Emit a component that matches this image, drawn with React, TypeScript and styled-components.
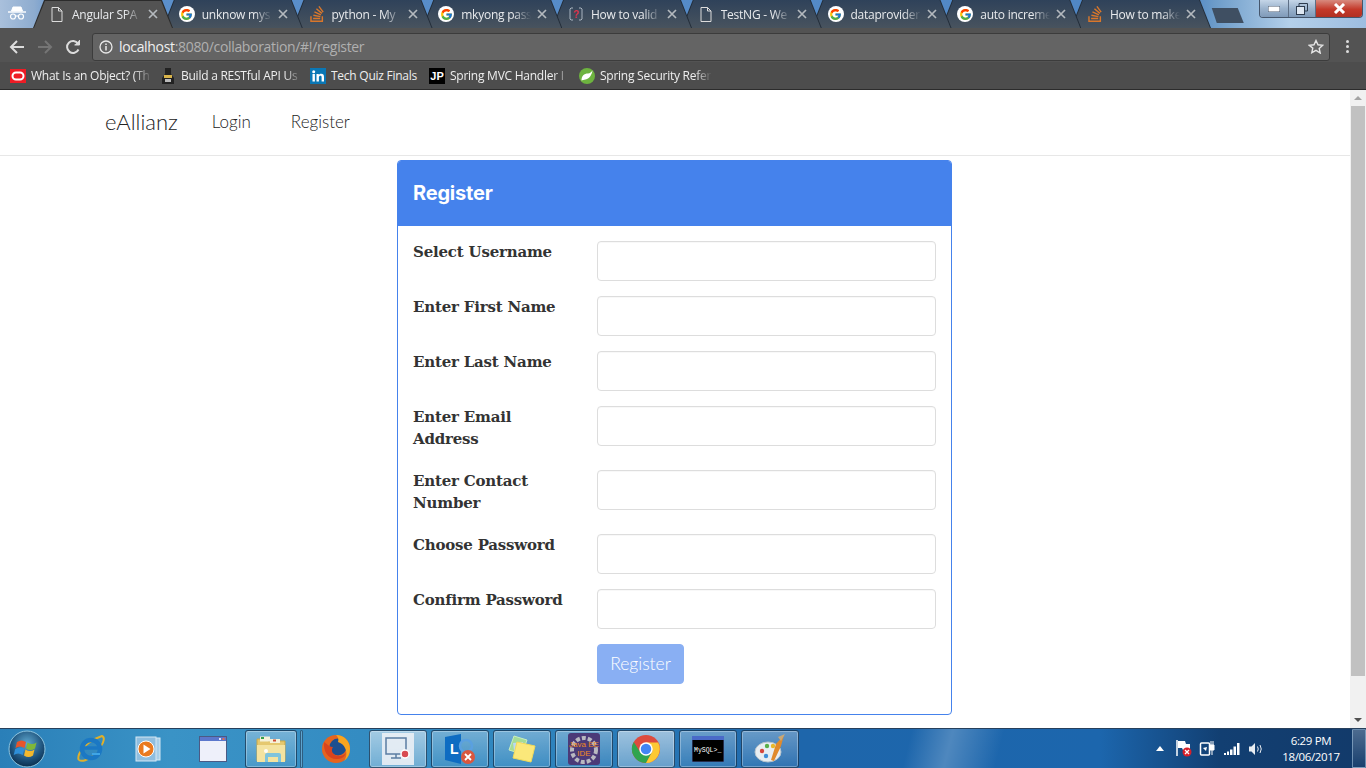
import React from 'react';
import styled, { createGlobalStyle } from 'styled-components';
import { FcGoogle } from 'react-icons/fc';
import { SiStackoverflow } from 'react-icons/si';

const GlobalStyle = createGlobalStyle`
  html, body { margin: 0; padding: 0; height: 100%; overflow: hidden; background: #fff; }
  * { box-sizing: border-box; }
`;

const UI = '"Open Sans", "Liberation Sans", sans-serif';
const THIN = 'Lato, "Liberation Sans", sans-serif';

const Screen = styled.div`
  width: 1366px;
  height: 768px;
  display: flex;
  flex-direction: column;
  overflow: hidden;
`;

/* browser chrome */
const TabStrip = styled.div`
  height: 28px;
  flex: none;
  display: flex;
  background: linear-gradient(90deg, #a9c0dc 0, #8eaccf 34px, #5c90cc 60px, #4f86c4 1190px, #6d9cc9 1215px, #b4d0ea 1290px, #9dbde0 1366px);
  position: relative;
  overflow: hidden;
`;
const Incognito = styled.div`
  width: 33px;
  flex: none;
  display: flex;
  align-items: center;
  justify-content: center;
  padding-bottom: 2px;
  position: relative;
  z-index: 20;
`;
const TabRow = styled.div`
  display: flex;
`;
const Tab = styled.div<{ $active?: boolean; $z: number }>`
  width: 140px;
  height: 28px;
  margin-right: -10.25px;
  flex: none;
  position: relative;
  z-index: ${p => p.$z};
  background: ${p => (p.$active ? '#2b2b2b' : '#222c38')};
  clip-path: polygon(0 100%, 11px 0, 129px 0, 140px 100%);
  display: flex;
  align-items: center;
  padding: 0 15px 0 16px;
  gap: 7px;
  &::before {
    content: '';
    position: absolute;
    inset: ${p => (p.$active ? '1px' : '0')} 1px 0 1px;
    background: ${p => (p.$active ? '#535353' : 'linear-gradient(#2f425a, #48535e)')};
    clip-path: polygon(0 100%, 11px 0, calc(100% - 11px) 0, 100% 100%);
  }
  & > * { position: relative; }
`;
const TabIcon = styled.span`
  width: 16px;
  height: 16px;
  flex: none;
  display: flex;
  align-items: center;
  justify-content: center;
`;
const TabTitle = styled.span`
  flex: 1;
  font: 12px ${UI};
  letter-spacing: -0.25px;
  color: #e8eaed;
  white-space: nowrap;
  overflow: hidden;
  -webkit-mask-image: linear-gradient(90deg, #000 72%, transparent 96%);
  mask-image: linear-gradient(90deg, #000 72%, transparent 96%);
`;
const TabClose = styled.span`
  flex: none;
  width: 10px;
  height: 10px;
  margin-left: -4px;
  display: flex;
`;
const NewTab = styled.div`
  width: 33px;
  height: 15px;
  margin: 8px 0 0 10px;
  background: #3f4f62;
  clip-path: polygon(1px 0, 27px 0, 33px 100%, 6px 100%);
  flex: none;
`;
const WindowButtons = styled.div`
  position: absolute;
  right: 3px;
  top: 0;
  height: 18px;
  width: 104px;
  display: flex;
  border: 1px solid #45566c;
  border-top: none;
  border-radius: 0 0 4px 4px;
  overflow: hidden;
`;
const WinButton = styled.div<{ $close?: boolean; $w: number }>`
  width: ${p => p.$w}px;
  flex: none;
  display: flex;
  align-items: center;
  justify-content: center;
  border-right: 1px solid #5d6f86;
  background: ${p =>
    p.$close ? 'linear-gradient(#d88a7e, #c4392a 55%, #b13022)' : 'linear-gradient(#c5d6e8, #9bb3cd 50%, #7f9ab8)'};
`;

const Toolbar = styled.div`
  height: 34px;
  flex: none;
  background: #535353;
  display: flex;
  align-items: center;
  padding: 3px 0 0 3px;
`;
const NavBtn = styled.span`
  width: 28px;
  height: 20px;
  flex: none;
  display: flex;
  align-items: center;
  justify-content: center;
`;
const Omnibox = styled.div`
  width: 1238px;
  height: 28px;
  margin-left: 5px;
  flex: none;
  background: #646464;
  border: 1px solid #3c3c3c;
  border-radius: 3px;
  display: flex;
  align-items: center;
  padding: 0 5px 0 6px;
`;
const Url = styled.div`
  flex: 1;
  margin-left: 6px;
  font: 14px ${UI};
  color: #b0b0b0;
  letter-spacing: -0.33px;
  b { font-weight: 400; color: #f0f0f0; }
`;
const MenuDots = styled.span`
  margin-left: 16px;
  width: 4px;
  display: flex;
  flex-direction: column;
  gap: 2px;
  i { width: 3px; height: 3px; background: #ddd; border-radius: 50%; display: block; }
`;
const Bookmarks = styled.div`
  height: 28px;
  flex: none;
  background: #4d4d4d;
  border-bottom: 1px solid #2c2c2c;
  display: flex;
  align-items: center;
  padding-left: 10px;
`;
const Bookmark = styled.div<{ $w: number }>`
  width: ${p => p.$w}px;
  flex: none;
  display: flex;
  align-items: center;
  gap: 5px;
`;
const BookmarkIcon = styled.span`
  width: 16px;
  height: 16px;
  flex: none;
  display: flex;
  align-items: center;
  justify-content: center;
`;
const JpBadge = styled(BookmarkIcon)`
  background: #000;
  color: #fff;
  font: 700 11px "Liberation Sans", sans-serif;
`;
const BookmarkTitle = styled.span<{ $fade?: boolean }>`
  font: 12px ${UI};
  letter-spacing: -0.25px;
  color: #eee;
  white-space: nowrap;
  overflow: hidden;
  flex: 1;
  ${p =>
    p.$fade
      ? `-webkit-mask-image: linear-gradient(90deg,#000 80%,transparent 94%); mask-image: linear-gradient(90deg,#000 80%,transparent 94%);`
      : ''}
`;

/* page */
const Viewport = styled.div`
  flex: 1;
  display: flex;
  min-height: 0;
`;
const Page = styled.div`
  flex: 1;
  background: #fff;
  display: flex;
  flex-direction: column;
  align-items: stretch;
`;
const Navbar = styled.nav`
  height: 66px;
  flex: none;
  border-bottom: 1px solid #e7e7e7;
  display: flex;
  align-items: center;
  padding: 0 0 3px 105px;
  font-family: ${THIN};
  font-weight: 300;
`;
const Brand = styled.span`
  font-size: 22px;
  margin-right: 34px;
  color: #222;
  font-weight: 300;
`;
const NavLink = styled.span`
  font-size: 17px;
  margin-right: 40px;
  color: #222;
`;
const Panel = styled.section`
  width: 555px;
  height: 555px;
  margin: 4px 0 0 397px;
  border: 1px solid #4582ec;
  border-radius: 4px;
  background: #fff;
  overflow: hidden;
`;
const PanelHead = styled.h3`
  margin: 0;
  height: 65px;
  background: #4582ec;
  color: #fff;
  font: 700 20px/65px Inter, ${THIN};
  letter-spacing: -0.2px;
  padding-left: 15px;
`;
const PanelBody = styled.div`
  padding: 15px 15px 15px;
`;
const FormRow = styled.div`
  display: grid;
  grid-template-columns: 184px 339px;
  margin-bottom: 15px;
`;
const Label = styled.label`
  font: 700 15px/22px 'DejaVu Serif', 'Liberation Serif', serif;
  letter-spacing: -0.2px;
  color: #333;
  margin-bottom: 5px;
  max-width: 158px;
  align-self: start;
`;
const Input = styled.input`
  width: 339px;
  height: 40px;
  border: 1px solid #ddd;
  border-radius: 4px;
  background: #fff;
  outline: none;
  box-shadow: inset 0 1px 1px rgba(0, 0, 0, 0.03);
`;
const SubmitButton = styled.button`
  width: 87px;
  height: 40px;
  grid-column: 2;
  border: 1px solid #89aff3;
  border-radius: 4px;
  background: #89aff3;
  color: #fff;
  font: 300 17.5px ${THIN};
  padding: 0 0 2px;
`;

const Scrollbar = styled.div`
  width: 16px;
  flex: none;
  background: #f1f1f1;
  display: flex;
  flex-direction: column;
  align-items: center;
`;
const ScrollArrow = styled.div<{ $down?: boolean }>`
  width: 16px;
  height: 16px;
  flex: none;
  display: flex;
  align-items: center;
  justify-content: center;
  &::after {
    content: '';
    border-left: 4px solid transparent;
    border-right: 4px solid transparent;
    ${p => (p.$down ? 'border-top: 4px solid #505050;' : 'border-bottom: 4px solid #a3a3a3;')}
  }
`;
const ScrollThumb = styled.div`
  width: 14px;
  height: 570px;
  flex: none;
  background: #c1c1c1;
`;
const ScrollRest = styled.div`
  flex: 1;
`;

/* windows taskbar */
const Taskbar = styled.footer`
  height: 40px;
  flex: none;
  display: flex;
  align-items: center;
  border-top: 1px solid #27405c;
  background:
    linear-gradient(104deg, transparent 885px, rgba(255,255,255,0.22) 925px, transparent 975px),
    linear-gradient(90deg, #2a7fb8 0, #3a93c6 170px, #2f86bf 520px, #1e66ab 800px, #1c66ad 1100px, #123f72 1220px, #123a6a 1366px);
  position: relative;
`;
const Orb = styled.div`
  width: 52px;
  margin-left: 1px;
  flex: none;
  display: flex;
  justify-content: center;
`;
const QuickIcon = styled.div<{ $w: number; $pad?: number }>`
  width: ${p => p.$w}px;
  padding-left: ${p => p.$pad ?? 0}px;
  flex: none;
  display: flex;
  justify-content: center;
  align-items: center;
`;
const TaskButton = styled.div<{ $active?: boolean; $w?: number }>`
  width: ${p => p.$w ?? 58}px;
  height: 38px;
  margin-right: 4px;
  flex: none;
  display: flex;
  align-items: center;
  justify-content: center;
  border: 1px solid rgba(15, 45, 75, 0.75);
  border-radius: 3px;
  box-shadow: inset 0 0 0 1px rgba(255, 255, 255, 0.3);
  background: ${p =>
    p.$active
      ? 'linear-gradient(rgba(255,255,255,0.55), rgba(255,255,255,0.3))'
      : 'linear-gradient(rgba(255,255,255,0.32), rgba(255,255,255,0.08))'};
`;
const Separator = styled.div`
  width: 3px;
  height: 38px;
  margin-left: -1px;
  flex: none;
  border: 1px solid rgba(15, 45, 75, 0.6);
  border-radius: 2px;
  background: rgba(255,255,255,0.2);
`;
const Tray = styled.div`
  margin-left: auto;
  height: 100%;
  display: flex;
  align-items: center;
`;
const TrayIcon = styled.span<{ $w: number }>`
  width: ${p => p.$w}px;
  flex: none;
  display: flex;
  align-items: center;
  justify-content: center;
`;
const Clock = styled.div`
  width: 78px;
  margin-left: 4px;
  text-align: center;
  font: 11.5px/16px ${UI};
  color: #fff;
  letter-spacing: -0.35px;
`;
const ShowDesktop = styled.div`
  width: 14px;
  height: 100%;
  margin-left: 2px;
  border: 1px solid rgba(170, 200, 225, 0.55);
  border-radius: 1px;
  background: linear-gradient(rgba(255,255,255,0.25), rgba(255,255,255,0.03));
`;
const GoogleDisc = styled.span`
  background: #fff;
  border-radius: 50%;
  width: 16px;
  height: 16px;
  display: flex;
  align-items: center;
  justify-content: center;
`;
const RemoteTile = styled.span`
  width: 32px;
  height: 32px;
  background: rgba(235, 240, 245, 0.9);
  display: flex;
  align-items: center;
  justify-content: center;
`;

/* drawings */
const PageIcon = () => (
  <svg width="12" height="15" viewBox="0 0 12 15" fill="none" stroke="#dcdcdc" strokeWidth="1">
    <path d="M1 .5h6.5L11 4v10.5H1zM7.5.5V4H11" />
  </svg>
);
const SoIcon = () => <SiStackoverflow size={16} color="#d9772b" />;
const GoogleIcon = () => (
  <GoogleDisc>
    <FcGoogle size={13} />
  </GoogleDisc>
);
const QuestionIcon = () => (
  <svg width="14" height="14" viewBox="0 0 14 14" fill="none">
    <path d="M4 1H2L1 2v10l1 1h2M10 1h2l1 1v10l-1 1h-2" stroke="#a9b4c0" />
    <text x="7" y="11" textAnchor="middle" fontSize="10" fontWeight="700" fill="#d8334a" fontFamily="Liberation Sans">?</text>
  </svg>
);
const CloseX = () => (
  <svg width="10" height="10" viewBox="0 0 10 10" stroke="#b4b9be" strokeWidth="1.7">
    <path d="M1 1l8 8M9 1l-8 8" />
  </svg>
);
const IncognitoIcon = () => (
  <svg width="18" height="14" viewBox="0 0 18 14" fill="none" stroke="#fff">
    <path d="M5 1h8l1.5 4h-11z" fill="#fff" />
    <path d="M0 6h18" strokeWidth="1.4" />
    <circle cx="5" cy="10.5" r="2.5" strokeWidth="1.2" />
    <circle cx="13" cy="10.5" r="2.5" strokeWidth="1.2" />
    <path d="M7.5 10h3" />
  </svg>
);
const LinkedinIcon = () => (
  <svg width="16" height="16" viewBox="0 0 16 16">
    <rect width="16" height="16" fill="#0a77b5" />
    <rect x="2.500" y="6" width="2.400" height="7.500" fill="#fff" />
    <circle cx="3.700" cy="3.700" r="1.500" fill="#fff" />
    <path d="M6.500 6h2.300v1.100C9.300 6.300 10.200 5.800 11.200 5.800c2 0 2.800 1.200 2.800 3.200v4.500h-2.400V9.300c0-1-.3-1.500-1.100-1.500-.9 0-1.600.6-1.600 1.700v4H6.500z" fill="#fff" />
  </svg>
);
const SpringIcon = () => (
  <svg width="16" height="16" viewBox="0 0 16 16">
    <circle cx="8" cy="8" r="8" fill="#6db33f" />
    <path d="M13.500 2.500C13 6 11 10.500 6.500 11.500 5 12 3.500 12 2.500 12.500 2.500 8 5 5.500 9 5.500c2 0 3.500-1.500 4.500-3z" fill="#fff" />
  </svg>
);
const ChromeLogo = ({ size }: { size: number }) => (
  <svg width={size} height={size} viewBox="0 0 32 32">
    <circle cx="16" cy="16" r="15" fill="#dd4b3e" />
    <path d="M3 8.500A15 15 0 0 0 16 31l7-13H9z" fill="#2fa44f" />
    <path d="M16 9h13a15 15 0 0 1-13 22l7-13z" fill="#fcc934" />
    <circle cx="16" cy="16" r="7.2" fill="#fff" />
    <circle cx="16" cy="16" r="5.6" fill="#4285f4" />
  </svg>
);
const OrbIcon = () => (
  <svg width="38" height="38" viewBox="0 0 38 38">
    <defs>
      <radialGradient id="orb" cx="50%" cy="35%" r="65%">
        <stop offset="0" stopColor="#5fa8d0" />
        <stop offset="0.7" stopColor="#1c4f78" />
        <stop offset="1" stopColor="#0c2f4e" />
      </radialGradient>
    </defs>
    <circle cx="19" cy="19" r="18" fill="url(#orb)" stroke="#8fc6e0" strokeWidth="1" />
    <path d="M9 12c3-2 6-2 9 0l-1.500 6c-3-2-6-2-9 0z" fill="#e8552a" />
    <path d="M19.500 12.500c3 2 6 2 9 0l-1.500 6c-3 2-6 2-9 0z" fill="#7fb83a" />
    <path d="M7.200 19c3-2 6-2 9 0l-1.500 6c-3-2-6-2-9 0z" fill="#2f8fd8" />
    <path d="M17.500 19.500c3 2 6 2 9 0l-1.500 6c-3 2-6 2-9 0z" fill="#f4b82c" />
  </svg>
);
const IeIcon = () => (
  <svg width="32" height="32" viewBox="0 0 32 32" fill="none">
    <path d="M5 27C2 24 8 10 28 3c3 1 2 6-1 10" stroke="#e0b02a" strokeWidth="2" />
    <path d="M5 27c3 2 9 0 14-4" stroke="#e0b02a" strokeWidth="2" />
    <circle cx="17" cy="16" r="9" stroke="#1b78c4" strokeWidth="4.500" />
    <path d="M10 15h14" stroke="#1b78c4" strokeWidth="3.500" />
    <path d="M18 21h8" stroke="#3fa5e6" strokeWidth="2" />
  </svg>
);
const WmpIcon = () => (
  <svg width="26" height="28" viewBox="0 0 26 28">
    <rect x="5" y="3" width="20" height="22" fill="#a8cfe8" stroke="#d6e8f4" />
    <rect x="1" y="2" width="20" height="24" fill="#8fbedf" stroke="#d6e8f4" />
    <circle cx="11" cy="14" r="8" fill="#ea7a1f" stroke="#fff" strokeWidth="1" />
    <path d="M8.500 9.500l7 4.500-7 4.500z" fill="#fff" />
  </svg>
);
const WindowIcon = () => (
  <svg width="28" height="26" viewBox="0 0 28 26">
    <rect x=".5" y=".5" width="27" height="25" fill="#eef0fa" stroke="#4b5a85" />
    <rect x="1" y="1" width="26" height="4" fill="#5b77cc" />
    <rect x="20" y="2" width="2" height="2" fill="#dfe6ff" />
    <rect x="23.500" y="2" width="2" height="2" fill="#e06a4c" />
  </svg>
);
const ExplorerIcon = () => (
  <svg width="32" height="30" viewBox="0 0 32 30">
    <path d="M2 5h9l2 2h17v20H2z" fill="#e5c86f" stroke="#c8a848" />
    <rect x="5" y="2.500" width="10" height="5" fill="#f6f1d8" />
    <rect x="6" y="3" width="3" height="2" fill="#37a04a" />
    <rect x="15" y="5" width="10" height="4" fill="#f6f1d8" />
    <rect x="18" y="5.500" width="3" height="2" fill="#cf4a34" />
    <path d="M2 11h28v17H2z" fill="#f4e3a0" />
    <path d="M10 28v-7q0-2 2-2h12q2 0 2 2v7h-3v-5H13v5z" fill="#7fc4dc" />
    <circle cx="11" cy="17" r="2" fill="#fff" opacity=".9" />
  </svg>
);
const FirefoxIcon = () => (
  <svg width="30" height="30" viewBox="0 0 30 30">
    <circle cx="15" cy="15" r="14" fill="#e5641e" />
    <circle cx="17" cy="13" r="8.500" fill="#1d4f8f" />
    <path d="M15 1c8 0 14 6 14 14 0 5-2 9-6 12 3-4 3-9 1-13-1-3-4-5-7-6 1-3 0-5-2-7z" fill="#f8a51f" />
    <path d="M3 8c-1 9 4 18 14 17 4 0 7-3 8-6-3 3-7 4-11 2-3-2-4-5-2-8-3 0-5-2-9-5z" fill="#d9441d" />
  </svg>
);
const RemoteIcon = () => (
  <RemoteTile>
    <svg width="26" height="24" viewBox="0 0 26 24" fill="none" stroke="#5b7da3" strokeWidth="1.500">
      <rect x="1" y="1" width="20" height="16" />
      <path d="M6 21h10M11 17v4" />
      <circle cx="20" cy="17" r="4" fill="#d84a50" stroke="#fff" />
    </svg>
  </RemoteTile>
);
const LyncIcon = () => (
  <svg width="32" height="32" viewBox="0 0 32 32" fill="none">
    <path d="M1 4l16-3v30L1 27z" fill="#0e6cc2" />
    <text x="6" y="21" fontSize="14" fontWeight="700" fill="#fff" fontFamily="Liberation Sans">L</text>
    <circle cx="22" cy="13" r="6" stroke="#5aa0e0" strokeWidth="2.500" />
    <circle cx="24" cy="24" r="7" fill="#d9573f" />
    <path d="M21 21l6 6M27 21l-6 6" stroke="#fff" strokeWidth="1.800" />
  </svg>
);
const NotesIcon = () => (
  <svg width="32" height="30" viewBox="0 0 32 30">
    <path d="M8 2l13 4-5 14-13-4z" fill="#a5dc96" stroke="#c9eec0" />
    <path d="M7 9l10-1 2 14-10 1z" fill="#b9d8f4" />
    <path d="M11 8l18 4-4 16-18-4z" fill="#fbe87a" stroke="#f2da58" />
  </svg>
);
const EclipseIcon = () => (
  <svg width="32" height="32" viewBox="0 0 32 32">
    <rect width="32" height="32" rx="3" fill="#4b3a78" />
    <circle cx="16" cy="17" r="12" fill="none" stroke="#b9b9c0" strokeWidth="4" strokeDasharray="4 2" />
    <text x="16" y="14" textAnchor="middle" fontSize="8" fill="#f08a24" fontFamily="Liberation Sans">Java EE</text>
    <text x="16" y="23" textAnchor="middle" fontSize="8" fill="#f08a24" fontFamily="Liberation Sans">IDE</text>
  </svg>
);
const MysqlIcon = () => (
  <svg width="32" height="26" viewBox="0 0 32 26">
    <rect width="32" height="26" fill="#000" stroke="#4a5a9a" />
    <rect width="32" height="4" fill="#4a6ac8" />
    <text x="2" y="16" fontSize="6.500" fill="#fff" fontFamily="Liberation Mono">MySQL&gt;_</text>
  </svg>
);
const PaintIcon = () => (
  <svg width="32" height="30" viewBox="0 0 32 30">
    <ellipse cx="14" cy="18" rx="13" ry="10" fill="#e8eef2" stroke="#b8c4cc" />
    <circle cx="8" cy="17" r="2.200" fill="#d5463c" />
    <circle cx="13" cy="12" r="2.200" fill="#5ab04a" />
    <circle cx="19" cy="12" r="2.200" fill="#e8b82c" />
    <circle cx="12" cy="22" r="2.200" fill="#3f8fd8" />
    <path d="M30 1l-8 9-5 16 3 1 7-15z" fill="#e08a2c" />
    <path d="M31 0l-7 3 3 4z" fill="#c8a878" />
  </svg>
);
const PlugIcon = () => (
  <svg width="18" height="17" viewBox="0 0 18 17" fill="#fff" stroke="#fff">
    <rect x="1.500" y="3" width="9" height="12" rx="1" fill="none" strokeWidth="1.500" />
    <path d="M4 8l4-1-1 4z" stroke="none" />
    <path d="M11 5h4v5h-4zM12 1v4M14 1v4M13 10v5" fill="#fff" strokeWidth="1" />
  </svg>
);
const FlagIcon = () => (
  <svg width="16" height="17" viewBox="0 0 16 17">
    <path d="M1 0v16" stroke="#fff" strokeWidth="1.500" />
    <path d="M2 1h7l1 3h4v6H7L6 8H2z" fill="#fff" />
    <circle cx="11" cy="12" r="4.500" fill="#d8202a" />
    <path d="M9 10l4 4M13 10l-4 4" stroke="#fff" strokeWidth="1.300" />
  </svg>
);
const SignalIcon = () => (
  <svg width="16" height="12" viewBox="0 0 16 12" fill="#fff">
    <rect x="0" y="10" width="2" height="2" />
    <rect x="3" y="8.500" width="2" height="3.500" />
    <rect x="6" y="6.500" width="2.500" height="5.500" />
    <rect x="9.500" y="3.500" width="2.500" height="8.500" />
    <rect x="13" y="0" width="2.500" height="12" />
  </svg>
);
const SpeakerIcon = () => (
  <svg width="16" height="14" viewBox="0 0 16 14" fill="none">
    <path d="M1 4.500h2.500L7 1v12L3.500 9.500H1z" fill="#e8edf2" />
    <path d="M9.500 4.500q1.500 2.500 0 5M12 3q2.500 4 0 8" stroke="#e8edf2" />
  </svg>
);

const tabs = [
  { title: 'Angular SPA', icon: <PageIcon />, active: true },
  { title: 'unknow mys', icon: <GoogleIcon /> },
  { title: 'python - My', icon: <SoIcon /> },
  { title: 'mkyong pass', icon: <GoogleIcon /> },
  { title: 'How to valid', icon: <QuestionIcon /> },
  { title: 'TestNG - We', icon: <PageIcon /> },
  { title: 'dataprovider', icon: <GoogleIcon /> },
  { title: 'auto increme', icon: <GoogleIcon /> },
  { title: 'How to make', icon: <SoIcon /> },
];

const fields = [
  'Select Username',
  'Enter First Name',
  'Enter Last Name',
  'Enter Email Address',
  'Enter Contact Number',
  'Choose Password',
  'Confirm Password',
];

const App = () => (
  <Screen>
    <GlobalStyle />
    <TabStrip>
      <Incognito>
        <IncognitoIcon />
      </Incognito>
      <TabRow>
        {tabs.map((t, i) => (
          <Tab key={t.title} $active={t.active} $z={t.active ? 15 : 12 - i}>
            <TabIcon>{t.icon}</TabIcon>
            <TabTitle>{t.title}</TabTitle>
            <TabClose>
              <CloseX />
            </TabClose>
          </Tab>
        ))}
      </TabRow>
      <NewTab />
      <WindowButtons>
        <WinButton $w={29}>
          <svg width="12" height="6"><rect width="12" height="6" fill="#fff" stroke="#46576c" /></svg>
        </WinButton>
        <WinButton $w={27}>
          <svg width="12" height="12" fill="none" stroke="#2e3c4e"><rect x=".5" y="3.500" width="8" height="8" fill="#dfe8f2" /><path d="M3 3V.5h8.500V8H9" /></svg>
        </WinButton>
        <WinButton $close $w={47}>
          <svg width="13" height="11" stroke="#fff" strokeWidth="3"><path d="M2 1l9 9M11 1l-9 9" /></svg>
        </WinButton>
      </WindowButtons>
    </TabStrip>

    <Toolbar>
      <NavBtn>
        <svg width="16" height="14" fill="none" stroke="#dcdcdc" strokeWidth="2"><path d="M15 7H2M8 1L2 7l6 6" /></svg>
      </NavBtn>
      <NavBtn>
        <svg width="16" height="14" fill="none" stroke="#757575" strokeWidth="2"><path d="M1 7h13M8 1l6 6-6 6" /></svg>
      </NavBtn>
      <NavBtn>
        <svg width="16" height="16" fill="none" stroke="#dcdcdc" strokeWidth="2"><path d="M13.500 10.500A6 6 0 1 1 13 4.500" /><path d="M14.500 1v5h-5" fill="#dcdcdc" strokeWidth="1" /></svg>
      </NavBtn>
      <Omnibox>
        <svg width="14" height="14" fill="none" stroke="#e8e8e8"><circle cx="7" cy="7" r="6" strokeWidth="1.300" /><path d="M7 6v4.500M7 3.500v1.500" strokeWidth="1.500" /></svg>
        <Url>
          <b>localhost</b>:8080/collaboration/#!/register
        </Url>
        <svg width="16" height="15" viewBox="0 0 16 15" fill="none" stroke="#e4e4e4" strokeWidth="1.400"><path d="M8 1.500l2 4.300 4.700.5-3.500 3.100 1 4.600L8 11.300l-4.200 2.400 1-4.600L1.300 6.300 6 5.800z" /></svg>
      </Omnibox>
      <MenuDots>
        <i /><i /><i />
      </MenuDots>
    </Toolbar>

    <Bookmarks>
      <Bookmark $w={150}>
        <BookmarkIcon>
          <svg width="16" height="14"><rect width="16" height="14" fill="#ee1c25" /><rect x="2.500" y="3.500" width="11" height="7" rx="3.500" fill="none" stroke="#fff" strokeWidth="2" /></svg>
        </BookmarkIcon>
        <BookmarkTitle $fade>What Is an Object? (Th</BookmarkTitle>
      </Bookmark>
      <Bookmark $w={150}>
        <BookmarkIcon>
          <svg width="12" height="16"><path d="M3 0h6v6l3 4v6H0v-6l3-4z" fill="#222" /><rect x="2" y="7" width="8" height="3" fill="#d9b44a" /><rect x="3" y="11" width="6" height="3" fill="#bbb" /></svg>
        </BookmarkIcon>
        <BookmarkTitle $fade>Build a RESTful API Us</BookmarkTitle>
      </Bookmark>
      <Bookmark $w={119}>
        <BookmarkIcon>
          <LinkedinIcon />
        </BookmarkIcon>
        <BookmarkTitle>Tech Quiz Finals</BookmarkTitle>
      </Bookmark>
      <Bookmark $w={150}>
        <JpBadge>JP</JpBadge>
        <BookmarkTitle $fade>Spring MVC Handler I</BookmarkTitle>
      </Bookmark>
      <Bookmark $w={140}>
        <BookmarkIcon>
          <SpringIcon />
        </BookmarkIcon>
        <BookmarkTitle $fade>Spring Security Refere</BookmarkTitle>
      </Bookmark>
    </Bookmarks>

    <Viewport>
      <Page>
        <Navbar>
          <Brand>eAllianz</Brand>
          <NavLink>Login</NavLink>
          <NavLink>Register</NavLink>
        </Navbar>
        <Panel>
          <PanelHead>Register</PanelHead>
          <PanelBody>
            {fields.map(f => (
              <FormRow key={f}>
                <Label>{f}</Label>
                <Input type="text" />
              </FormRow>
            ))}
            <FormRow>
              <SubmitButton type="button">Register</SubmitButton>
            </FormRow>
          </PanelBody>
        </Panel>
      </Page>
      <Scrollbar>
        <ScrollArrow />
        <ScrollThumb />
        <ScrollRest />
        <ScrollArrow $down />
      </Scrollbar>
    </Viewport>

    <Taskbar>
      <Orb>
        <OrbIcon />
      </Orb>
      <QuickIcon $w={74}><IeIcon /></QuickIcon>
      <QuickIcon $w={42}><WmpIcon /></QuickIcon>
      <QuickIcon $w={76} $pad={12}><WindowIcon /></QuickIcon>
      <TaskButton $w={52}><ExplorerIcon /></TaskButton>
      <Separator />
      <QuickIcon $w={66}><FirefoxIcon /></QuickIcon>
      <TaskButton $active><RemoteIcon /></TaskButton>
      <TaskButton><LyncIcon /></TaskButton>
      <TaskButton><NotesIcon /></TaskButton>
      <TaskButton><EclipseIcon /></TaskButton>
      <TaskButton $active><ChromeLogo size={30} /></TaskButton>
      <TaskButton><MysqlIcon /></TaskButton>
      <TaskButton><PaintIcon /></TaskButton>
      <Tray>
        <TrayIcon $w={24}>
          <svg width="8" height="5" fill="#fff"><path d="M0 5l4-5 4 5z" /></svg>
        </TrayIcon>
        <TrayIcon $w={24}><FlagIcon /></TrayIcon>
        <TrayIcon $w={24}><PlugIcon /></TrayIcon>
        <TrayIcon $w={24}><SignalIcon /></TrayIcon>
        <TrayIcon $w={24}><SpeakerIcon /></TrayIcon>
        <Clock>
          6:29 PM
          <br />
          18/06/2017
        </Clock>
        <ShowDesktop />
      </Tray>
    </Taskbar>
  </Screen>
);

export default App;
